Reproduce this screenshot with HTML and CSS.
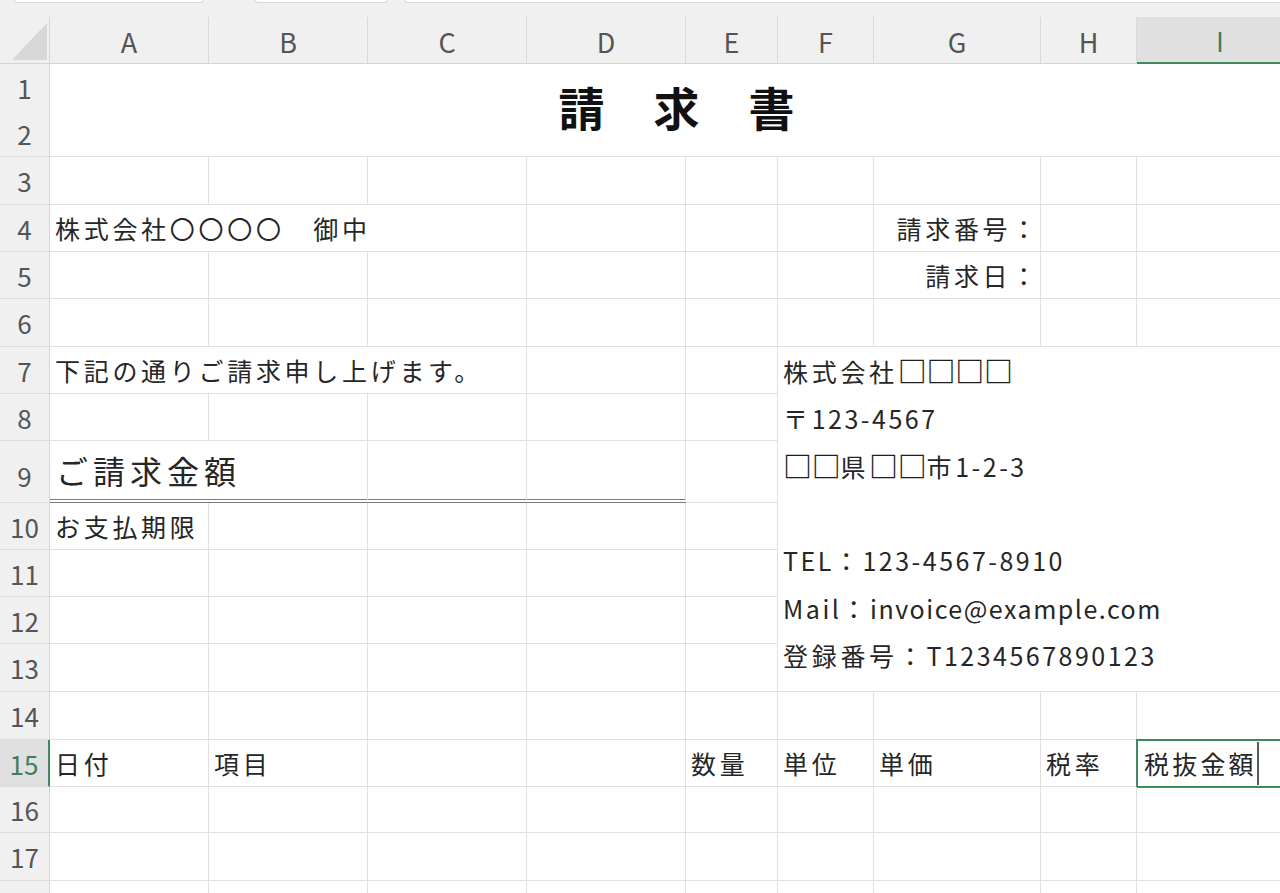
FILE: index.html
```html
<!DOCTYPE html>
<html lang="ja">
<head>
<meta charset="utf-8">
<title>請求書</title>
<link rel="stylesheet" href="styles.css">
</head>
<body>
<div class="topstrip">
  <span class="tab t1"></span>
  <span class="tab t2"></span>
  <span class="tab t3"></span>
</div>
<div class="sheet">
  <!-- header row -->
  <div class="corner"><svg width="50" height="47" viewBox="0 0 50 47"><polygon points="12,43 47,6 47,43" fill="#d7d7d7"/></svg></div>
  <div class="ch">A</div>
  <div class="ch">B</div>
  <div class="ch">C</div>
  <div class="ch">D</div>
  <div class="ch">E</div>
  <div class="ch">F</div>
  <div class="ch">G</div>
  <div class="ch">H</div>
  <div class="ch ch-active">I</div>

  <!-- rows 1-2 -->
  <div class="rh rh-nol">1</div>
  <div class="c title-cell"><span class="title">請　求　書</span></div>
  <div class="rh">2</div>

  <!-- row 3 -->
  <div class="rh">3</div>
  <div class="c"></div><div class="c"></div><div class="c"></div><div class="c"></div><div class="c"></div><div class="c"></div><div class="c"></div><div class="c"></div><div class="c"></div>

  <!-- row 4 -->
  <div class="rh">4</div>
  <div class="c span3">株式会社〇〇〇〇　御中</div>
  <div class="c"></div><div class="c"></div><div class="c"></div>
  <div class="c right">請求番号：</div>
  <div class="c"></div><div class="c"></div>

  <!-- row 5 -->
  <div class="rh">5</div>
  <div class="c"></div><div class="c"></div><div class="c"></div><div class="c"></div><div class="c"></div><div class="c"></div>
  <div class="c right">請求日：</div>
  <div class="c"></div><div class="c"></div>

  <!-- row 6 -->
  <div class="rh">6</div>
  <div class="c"></div><div class="c"></div><div class="c"></div><div class="c"></div><div class="c"></div><div class="c"></div><div class="c"></div><div class="c"></div><div class="c"></div>

  <!-- row 7 -->
  <div class="rh">7</div>
  <div class="c span3">下記の通りご請求申し上げます。</div>
  <div class="c"></div><div class="c"></div>
  <div class="c issuer">
    <div class="ln">株式会社<span class="sq">□□□□</span></div>
    <div class="ln">〒<span class="en">123-4567</span></div>
    <div class="ln"><span class="sq">□□</span>県<span class="sq">□□</span>市<span class="en">1-2-3</span></div>
    <div class="ln">&nbsp;</div>
    <div class="ln"><span class="en">TEL</span>：<span class="en">123-4567-8910</span></div>
    <div class="ln"><span class="en">Mail</span>：<span class="en tight">invoice@example.com</span></div>
    <div class="ln">登録番号：<span class="en">T1234567890123</span></div>
  </div>

  <!-- row 8 -->
  <div class="rh">8</div>
  <div class="c"></div><div class="c"></div><div class="c"></div><div class="c"></div><div class="c"></div>

  <!-- row 9 -->
  <div class="rh rh9">9</div>
  <div class="c span2 dbl amount">ご請求金額</div>
  <div class="c dbl"></div><div class="c dbl"></div>
  <div class="c"></div>

  <!-- row 10 -->
  <div class="rh">10</div>
  <div class="c">お支払期限</div>
  <div class="c"></div><div class="c"></div><div class="c"></div><div class="c"></div>

  <!-- row 11 -->
  <div class="rh">11</div>
  <div class="c"></div><div class="c"></div><div class="c"></div><div class="c"></div><div class="c"></div>

  <!-- row 12 -->
  <div class="rh">12</div>
  <div class="c"></div><div class="c"></div><div class="c"></div><div class="c"></div><div class="c"></div>

  <!-- row 13 -->
  <div class="rh">13</div>
  <div class="c"></div><div class="c"></div><div class="c"></div><div class="c"></div><div class="c"></div>

  <!-- row 14 -->
  <div class="rh">14</div>
  <div class="c"></div><div class="c"></div><div class="c"></div><div class="c"></div><div class="c"></div><div class="c"></div><div class="c"></div><div class="c"></div><div class="c"></div>

  <!-- row 15 -->
  <div class="rh rh-active">15</div>
  <div class="c">日付</div>
  <div class="c">項目</div>
  <div class="c"></div>
  <div class="c"></div>
  <div class="c">数量</div>
  <div class="c">単位</div>
  <div class="c">単価</div>
  <div class="c">税率</div>
  <div class="c active-cell"><span class="val">税抜金額</span><span class="caret"></span></div>

  <!-- row 16 -->
  <div class="rh">16</div>
  <div class="c"></div><div class="c"></div><div class="c"></div><div class="c"></div><div class="c"></div><div class="c"></div><div class="c"></div><div class="c"></div><div class="c"></div>

  <!-- row 17 -->
  <div class="rh">17</div>
  <div class="c"></div><div class="c"></div><div class="c"></div><div class="c"></div><div class="c"></div><div class="c"></div><div class="c"></div><div class="c"></div><div class="c"></div>

  <!-- row 18 (cut off by the window edge) -->
  <div class="rh"></div>
  <div class="c"></div><div class="c"></div><div class="c"></div><div class="c"></div><div class="c"></div><div class="c"></div><div class="c"></div><div class="c"></div><div class="c"></div>
</div>
</body>
</html>
```
FILE: styles.css
```css
html, body {
  margin: 0;
  padding: 0;
  background: #ffffff;
  overflow: hidden;
}
body {
  font-family: "Noto Sans CJK JP", "Noto Sans", sans-serif;
  color: #262626;
}

.topstrip {
  height: 17px;
  background: #f0f0f0;
  display: flex;
  align-items: flex-start;
}
.tab {
  display: block;
  height: 2px;
  background: #ffffff;
  border: 1px solid #dadada;
  border-top: 0;
  border-radius: 0 0 4px 4px;
}
.t1 { margin-left: 14px; width: 188px; }
.t2 { margin-left: 51px; width: 131px; }
.t3 { margin-left: 16px; flex: 1; border-right: 0; border-radius: 0 0 0 4px; }

.sheet {
  display: grid;
  width: 1304px;
  grid-template-columns: 50px 159px 159px 159px 159px 92px 96px 167px 96px 167px;
  grid-template-rows: 47px 47px 46px 48px 47px 47px 48px 47px 47px 62px 47px 47px 47px 48px 48px 47px 46px 48px 30px;
}

.corner {
  background: #f0f0f0;
  border-right: 1px solid #d6d6d6;
  border-bottom: 1px solid #d4d4d4;
  box-sizing: border-box;
  overflow: hidden;
}
.corner svg { display: block; }

.ch {
  background: #f0f0f0;
  border-right: 1px solid #dadada;
  border-bottom: 1px solid #d4d4d4;
  box-sizing: border-box;
  display: flex;
  align-items: center;
  justify-content: center;
  font-size: 27px;
  color: #555555;
  padding-top: 2px;
}
.ch-active {
  background: #e0e0e0;
  color: #3f7f5c;
  border-bottom: 2px solid #3d8a60;
}

.rh {
  background: #f0f0f0;
  border-right: 1px solid #d4d4d4;
  border-bottom: 1px solid #dcdcdc;
  box-sizing: border-box;
  display: flex;
  align-items: center;
  justify-content: center;
  font-size: 26px;
  color: #555555;
}
.rh-nol { border-bottom-color: #ececec; }
.rh9 { padding-top: 8px; }
.rh-active {
  background: #e0e0e0;
  color: #3f7f5c;
  border-right: 2px solid #3d8a60;
}

.c {
  border-right: 1px solid #e0e0e0;
  border-bottom: 1px solid #e0e0e0;
  box-sizing: border-box;
  display: flex;
  align-items: center;
  padding: 0 5px;
  font-size: 25px;
  letter-spacing: 3.7px;
  white-space: nowrap;
  overflow: hidden;
  min-width: 0;
}
.span2 { grid-column: span 2; }
.span3 { grid-column: span 3; }
.right { justify-content: flex-end; padding-right: 0; }

.title-cell {
  grid-column: span 9;
  grid-row: span 2;
  justify-content: center;
  padding-bottom: 8px;
}
.title {
  font-size: 46px;
  font-weight: 700;
  letter-spacing: 1.5px;
  color: #111111;
  padding-left: 1.5px;
}

.issuer {
  grid-column: span 4;
  grid-row: span 7;
  display: block;
  padding: 0 5px;
  line-height: 47.5px;
}
.ln { height: 47.5px; }
.en { letter-spacing: 2.5px; }
.en.tight { letter-spacing: 1.5px; }
.sq {
  font-size: 29px;
  font-weight: 700;
  letter-spacing: -0.3px;
  vertical-align: -1px;
  color: #1e1e1e;
}

.amount {
  font-size: 32px;
  letter-spacing: 5px;
  padding-left: 6px;
}
.dbl {
  border-bottom: 4px double #7a7a7a;
}

.active-cell {
  outline: 2px solid #3d8a60;
  outline-offset: -1px;
  align-items: stretch;
  padding-left: 7px;
}
.val {
  display: flex;
  align-items: center;
  letter-spacing: 3.2px;
}
.caret {
  width: 2px;
  background: #5a5a5a;
  margin: 2px 0 1px 0;
}
```
